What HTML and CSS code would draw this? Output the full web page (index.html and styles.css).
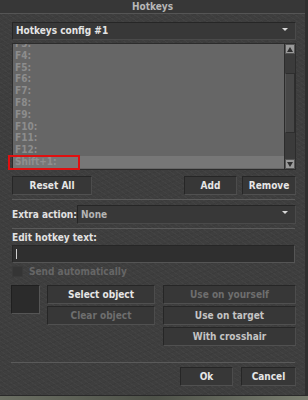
FILE: index.html
```html
<!DOCTYPE html>
<html lang="en">
<head>
    <meta charset="UTF-8">
    <title>Hotkeys</title>
    <link rel="stylesheet" href="styles.css">
</head>
<body>

<div class="window">
    <div class="titlebar">Hotkeys</div>

    <div class="content">
        <div class="combo">
            <span>Hotkeys config #1</span>
            <span class="combo-arrow"></span>
        </div>

        <div class="list-wrap">
            <div class="list">
                <div class="rows">
                    <div class="row">F3:</div>
                    <div class="row">F4:</div>
                    <div class="row">F5:</div>
                    <div class="row">F6:</div>
                    <div class="row">F7:</div>
                    <div class="row">F8:</div>
                    <div class="row">F9:</div>
                    <div class="row">F10:</div>
                    <div class="row">F11:</div>
                    <div class="row">F12:</div>
                    <div class="row selected">Shift+1:</div>
                </div>
            </div>
            <div class="scrollbar">
                <div class="sb-btn up"></div>
                <div class="sb-track"><div class="sb-thumb"></div></div>
                <div class="sb-btn down"></div>
            </div>
            <div class="marker"></div>
        </div>

        <div class="btn-row">
            <div class="btn reset">Reset All</div>
            <div class="spacer"></div>
            <div class="btn add">Add</div>
            <div class="btn remove">Remove</div>
        </div>

        <div class="sep"></div>

        <div class="extra">
            <span class="label">Extra action:</span>
            <div class="combo small">
                <span class="light">None</span>
                <span class="combo-arrow"></span>
            </div>
        </div>

        <div class="sep"></div>

        <div class="label edit-label">Edit hotkey text:</div>
        <div class="text-input"><span class="caret"></span></div>

        <div class="check-row">
            <span class="checkbox"></span>
            <span class="disabled-text">Send automatically</span>
        </div>

        <div class="object-area">
            <div class="item-box"></div>
            <div class="col mid">
                <div class="btn">Select object</div>
                <div class="btn disabled">Clear object</div>
            </div>
            <div class="col right">
                <div class="btn disabled">Use on yourself</div>
                <div class="btn soft">Use on target</div>
                <div class="btn soft">With crosshair</div>
            </div>
        </div>

        <div class="sep bottom-sep"></div>

        <div class="btn-row footer">
            <div class="spacer"></div>
            <div class="btn ok">Ok</div>
            <div class="btn cancel">Cancel</div>
        </div>
    </div>
</div>
<div class="below"></div>

</body>
</html>
```

FILE: styles.css
```css
body { margin: 0; width: 308px; height: 400px; overflow: hidden; background: #5b5d55; font-family: "DejaVu Sans Condensed", "DejaVu Sans", Verdana, sans-serif; font-size: 10px; font-weight: bold; color: #dcdcdc; white-space: nowrap; }

.window {
    height: 396px;
    box-sizing: border-box;
    border-right: 3px solid #2f2f2f;
    border-bottom: 1px solid #2a2a2a;
    background-color: #3e3e3e;
    background-image:
        repeating-linear-gradient(35deg, rgba(255,255,255,0.025) 0 1px, transparent 1px 4px),
        repeating-linear-gradient(-20deg, rgba(0,0,0,0.05) 0 1px, transparent 1px 5px);
    display: flex;
    flex-direction: column;
}

.titlebar {
    height: 13px;
    line-height: 13px;
    text-align: center;
    color: #b8b8b8;
    background: #373737;
    border-bottom: 1px solid #555;
}

.content { padding: 8px 9px 0 12px; display: flex; flex-direction: column; }

.combo {
    height: 18px;
    box-sizing: border-box;
    background: #383838;
    border: 1px solid #262626;
    border-bottom-color: #4a4a4a;
    border-right-color: #4a4a4a;
    display: flex;
    align-items: center;
    padding: 0 4px 1px 3px;
    justify-content: space-between;
    color: #e4e4e4;
}
.combo-arrow {
    width: 0; height: 0;
    border-left: 3px solid transparent;
    border-right: 3px solid transparent;
    border-top: 3px solid #d8d8d8;
    margin-right: 3px;
    margin-bottom: 3px;
}

.list-wrap { position: relative; display: flex; margin-top: 3px; height: 127px; }
.list {
    flex: 1;
    background: #666;
    border: 1px solid #2c2c2c;
    border-right: none;
    overflow: hidden;
    position: relative;
}
.rows { margin-top: -6px; }
.row { height: 11.8px; line-height: 12px; padding-left: 2px; color: #8d8d8d; }
.row.selected { background: #777; color: #8f8f8f; }

.scrollbar { width: 10px; display: flex; flex-direction: column; background: #3b3b3b; border: 1px solid #2c2c2c; }
.sb-btn { height: 10px; background: #9a9a9a; border: 1px solid #555; box-sizing: border-box; position: relative; }
.sb-btn::after { content: ""; position: absolute; left: 1px; border-left: 3px solid transparent; border-right: 3px solid transparent; }
.sb-btn.up::after { top: 2px; border-bottom: 5px solid #2e2e2e; }
.sb-btn.down::after { top: 2px; border-top: 5px solid #2e2e2e; }
.sb-track { flex: 1; position: relative; }
.sb-thumb { position: absolute; left: 0; right: 0; top: 19px; height: 58px; background: #474747; border: 1px solid #2e2e2e; border-left-color: #555; }

.marker {
    position: absolute;
    left: -4px; top: 112px;
    width: 68px; height: 11px;
    border: 2px solid #e01010;
}

.btn-row { display: flex; margin-top: 6px; gap: 5px; }
.spacer { flex: 1; }
.btn {
    height: 19px;
    box-sizing: border-box;
    background: #373737;
    border: 1px solid #262626;
    border-bottom-color: #505050;
    border-right-color: #4c4c4c;
    display: flex;
    align-items: center;
    justify-content: center;
    color: #e6e6e6;
    padding-bottom: 1px;
}
.btn.disabled { color: #6e6e6e; }
.btn.soft { color: #c4c4c4; }
.reset { width: 80px; }
.add { width: 53px; }
.remove { width: 54px; }

.sep { height: 1px; background: #5a5a5a; margin-top: 4px; margin-right: 1px; }

.extra { display: flex; align-items: center; margin-top: 5px; height: 19px; }
.extra .label { width: 65px; }
.combo.small { flex: 1; height: 19px; }
.light { color: #b4b4b4; }

.label { color: #e2e2e2; }
.edit-label { margin-top: 3px; height: 12px; line-height: 12px; }
.text-input {
    margin-top: 1px;
    height: 18px;
    box-sizing: border-box;
    background: #2f2f2f;
    border: 1px solid #262626;
    border-bottom-color: #555;
    border-right-color: #555;
    margin-right: 1px;
    padding: 3px 0 0 3px;
}
.caret { display: block; width: 1px; height: 10px; background: #d0d0d0; }

.check-row { display: flex; align-items: center; margin-top: 3px; height: 11px; gap: 6px; }
.checkbox { width: 9px; height: 9px; background: #353535; border: 1px solid #3a3a3a; }
.disabled-text { color: #666; }

.object-area { display: flex; margin-top: 8px; }
.item-box { width: 27px; height: 27px; margin-left: -1px; background: #2b2b2b; border: 1px solid #1f1f1f; border-bottom-color: #555; border-right-color: #555; }
.col { display: flex; flex-direction: column; gap: 2px; }
.col.mid { width: 108px; margin-left: 7px; }
.col.right { width: 133px; margin-left: 8px; }

.bottom-sep { margin-top: 16px; margin-left: -1px; }
.footer { margin-top: 4px; gap: 8px; }
.ok { width: 53px; }
.cancel { width: 55px; }

.below { height: 4px; background: linear-gradient(90deg, #6b6f63, #4e5249, #7a7e70); }
```
